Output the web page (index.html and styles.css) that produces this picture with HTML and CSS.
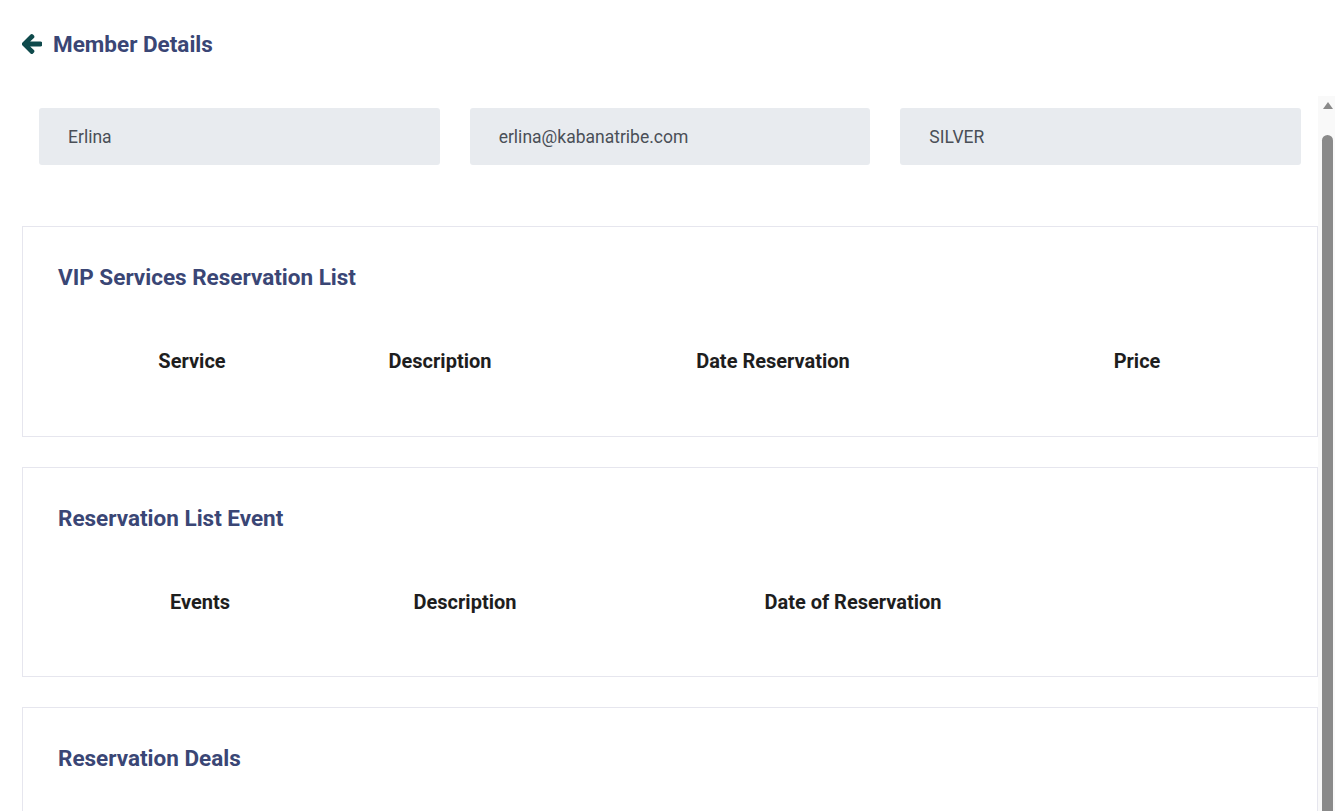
FILE: index.html
```html
<!DOCTYPE html>
<html lang="en">
<head>
<meta charset="utf-8">
<title>Member Details</title>
<link rel="stylesheet" href="styles.css">
</head>
<body>
<div class="page">
  <header class="page-header">
    <a class="back" href="#" aria-label="Back">
      <svg width="20" height="20" viewBox="-10 20 468 472" aria-hidden="true">
        <path fill="#0f4a4c" stroke="#0f4a4c" stroke-width="34" stroke-linejoin="round" d="M257.5 445.1l-22.2 22.2c-9.4 9.4-24.6 9.4-33.9 0L7 273c-9.4-9.4-9.4-24.6 0-33.9L201.4 44.7c9.4-9.4 24.6-9.4 33.9 0l22.2 22.2c9.5 9.5 9.3 25-.4 34.3L136.6 216H424c13.3 0 24 10.7 24 24v32c0 13.3-10.7 24-24 24H136.6l120.5 114.8c9.8 9.3 10 24.8.4 34.3z"/>
      </svg>
    </a>
    <h1 class="page-title">Member Details</h1>
  </header>
  <div class="main">
    <div class="content">
      <div class="info-row">
        <div class="info-field">Erlina</div>
        <div class="info-field">erlina@kabanatribe.com</div>
        <div class="info-field">SILVER</div>
      </div>

      <section class="card">
        <h2 class="card-title">VIP Services Reservation List</h2>
        <table class="list">
          <colgroup>
            <col class="c-268"><col class="c-228"><col class="c-438"><col>
          </colgroup>
          <thead>
            <tr><th>Service</th><th>Description</th><th>Date Reservation</th><th>Price</th></tr>
          </thead>
        </table>
      </section>

      <section class="card card-short">
        <h2 class="card-title">Reservation List Event</h2>
        <table class="list">
          <colgroup>
            <col class="c-284"><col class="c-246"><col class="c-530"><col>
          </colgroup>
          <thead>
            <tr><th>Events</th><th>Description</th><th>Date of Reservation</th><th></th></tr>
          </thead>
        </table>
      </section>

      <section class="card card-last">
        <h2 class="card-title">Reservation Deals</h2>
      </section>
    </div>
    <div class="scrollbar" aria-hidden="true">
      <div class="scroll-arrow"></div>
      <div class="scroll-thumb"></div>
    </div>
  </div>
</div>
</body>
</html>
```

FILE: styles.css
```css
* { box-sizing: border-box; }

html, body {
  margin: 0;
  height: 100%;
  overflow: hidden;
  background: #ffffff;
}

body {
  font-family: Roboto, "Liberation Sans", Arial, sans-serif;
  color: #212529;
}

.page {
  display: flex;
  flex-direction: column;
  height: 100vh;
}

.page-header {
  display: flex;
  align-items: center;
  gap: 11px;
  height: 96px;
  padding: 0 22px 8px;
  flex: none;
}

.back {
  display: flex;
  align-items: center;
  width: 20px;
  height: 20px;
}

.page-title {
  margin: 0;
  font-size: 22.5px;
  font-weight: 700;
  color: #3a4675;
}

.main {
  display: flex;
  flex: 1;
  min-height: 0;
}

.content {
  flex: 1;
  min-width: 0;
  padding: 12px 0 0 22px;
  overflow: hidden;
}

.info-row {
  display: grid;
  grid-template-columns: repeat(3, 1fr);
  gap: 30px;
  padding: 0 17px;
  margin-bottom: 61px;
}

.info-field {
  height: 57px;
  display: flex;
  align-items: center;
  padding: 1px 29px 0;
  background: #e8ebef;
  border-radius: 3px;
  font-size: 17.5px;
  color: #4a4f57;
}

.card {
  border: 1px solid #e6e6ee;
  padding: 35px 35px 51px;
  margin-bottom: 30px;
}

.card-short {
  padding-bottom: 50px;
}

.card-last {
  min-height: 200px;
}

.card-title {
  margin: 0;
  font-size: 22.5px;
  line-height: 30px;
  font-weight: 700;
  color: #3a4675;
}

.list {
  width: 100%;
  margin-top: 45px;
  border-collapse: collapse;
  table-layout: fixed;
}

.list th {
  height: 48px;
  padding: 12px 0;
  font-size: 20px;
  line-height: 24px;
  font-weight: 700;
  color: #1e1e1e;
  text-align: center;
}

.c-268 { width: 268px; }
.c-228 { width: 228px; }
.c-438 { width: 438px; }
.c-284 { width: 284px; }
.c-246 { width: 246px; }
.c-530 { width: 530px; }

.scrollbar {
  width: 17px;
  flex: none;
  display: flex;
  flex-direction: column;
  align-items: center;
  background: #f9f9f9;
  padding-top: 6px;
}

.scroll-arrow {
  width: 0;
  height: 0;
  border-left: 5px solid transparent;
  border-right: 5px solid transparent;
  border-bottom: 7px solid #8a8a8a;
  margin-left: 2px;
}

.scroll-thumb {
  margin-top: 26px;
  margin-left: 2px;
  width: 11px;
  flex: 1;
  background: #8a8a8a;
  border-radius: 6px 6px 0 0;
}
```
